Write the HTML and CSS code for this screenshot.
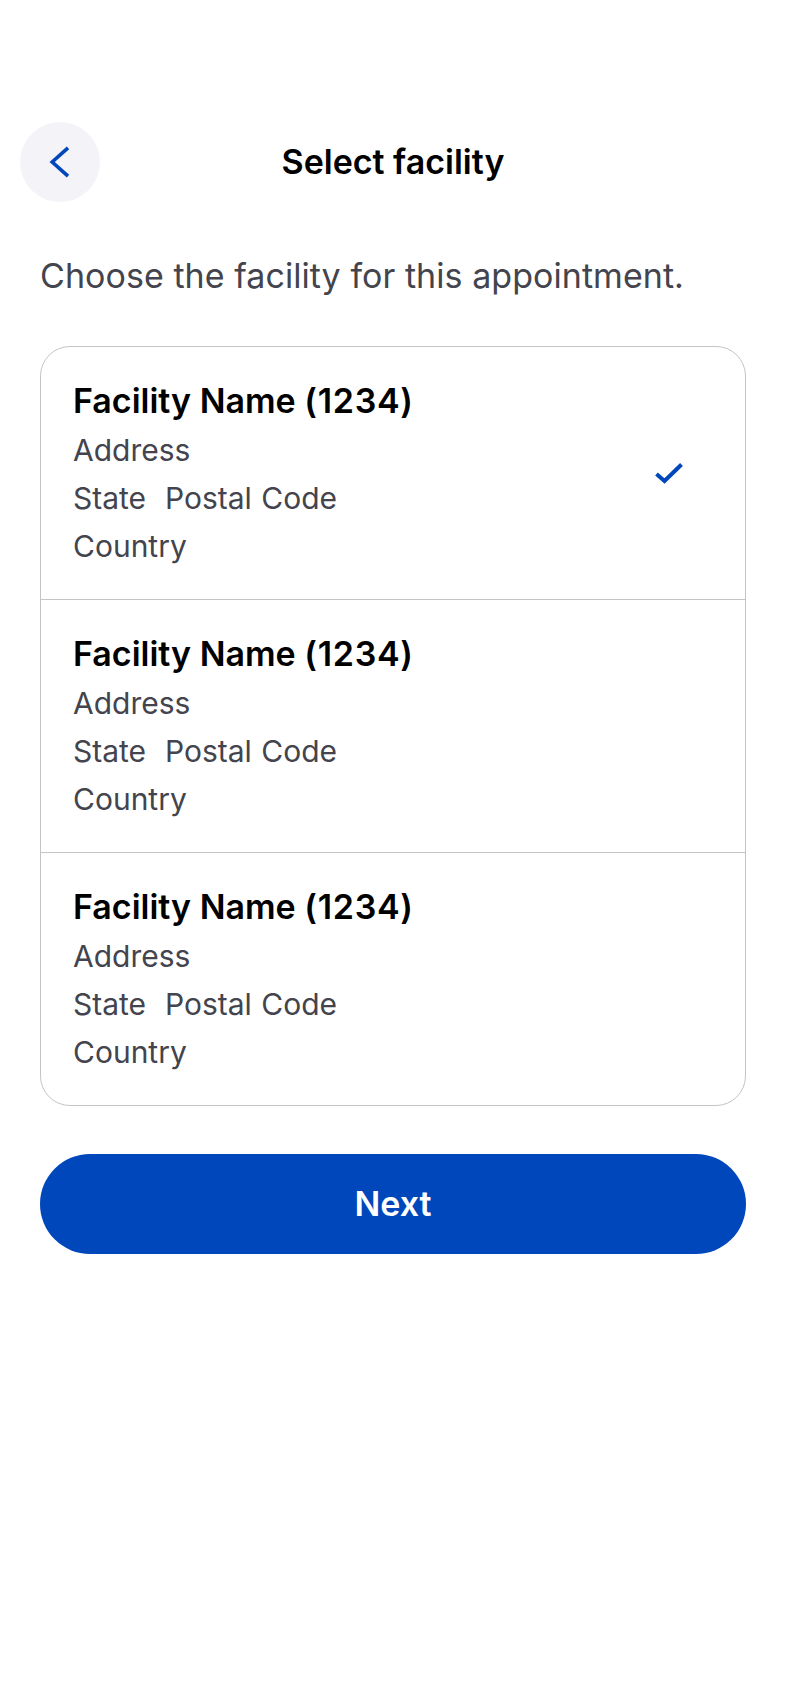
FILE: index.html
```html
<!DOCTYPE html>
<html lang="en">
<head>
<meta charset="utf-8">
<title>Select facility</title>
<link rel="stylesheet" href="styles.css">
</head>
<body>
<main class="screen">
  <header class="topbar">
    <button class="back" aria-label="Back">
      <svg class="back-icon" viewBox="0 0 24 36" width="24" height="36"><path d="M20 3.8 L4.2 18 L20 32.2" fill="none"/></svg>
    </button>
    <h1 class="title">Select facility</h1>
  </header>
  <p class="intro">Choose the facility for this appointment.</p>
  <section class="card">
    <div class="row">
      <div class="info">
        <h2 class="name">Facility Name <span class="code">(1234)</span></h2>
        <p class="line">Address</p>
        <p class="line line-state">State&nbsp; Postal Code</p>
        <p class="line">Country</p>
      </div>
      <svg class="check" viewBox="0 0 28 22" width="28" height="22"><path d="M1.5 12 L9.5 19 L26.5 2.5" fill="none"/></svg>
    </div>
    <div class="row">
      <div class="info">
        <h2 class="name">Facility Name <span class="code">(1234)</span></h2>
        <p class="line">Address</p>
        <p class="line line-state">State&nbsp; Postal Code</p>
        <p class="line">Country</p>
      </div>
    </div>
    <div class="row">
      <div class="info">
        <h2 class="name">Facility Name <span class="code">(1234)</span></h2>
        <p class="line">Address</p>
        <p class="line line-state">State&nbsp; Postal Code</p>
        <p class="line">Country</p>
      </div>
    </div>
  </section>
  <button class="next">Next</button>
</main>
</body>
</html>
```
FILE: styles.css
```css
* { box-sizing: border-box; }
html, body { margin: 0; padding: 0; background: #fff; }
body { font-family: Inter, "Liberation Sans", sans-serif; }
.screen { width: 786px; height: 1704px; padding: 122px 40px 0; }
.topbar { position: relative; display: flex; align-items: center; justify-content: center; height: 80px; }
.back { position: absolute; left: -20px; top: 0; width: 80px; height: 80px; border: 0; padding: 0; border-radius: 50%; background: #f3f3f8; display: flex; align-items: center; justify-content: center; }
.back-icon { stroke: #0047bb; stroke-width: 3.6; }
.title { margin: 0; font-size: 34px; font-weight: 600; line-height: 80px; color: #000; }
.intro { margin: 52px 0 0; font-size: 34px; line-height: 44px; color: #43444d; letter-spacing: 0.05px; }
.card { margin-top: 48px; border: 1px solid #c4c4c4; border-radius: 30px; }
.row { display: flex; align-items: center; justify-content: space-between; height: 253px; padding: 0 62px 0 32px; border-top: 1px solid #c4c4c4; }
.row:first-child { border-top: 0; height: 252px; }
.name { margin: 0 0 2px; padding-top: 2px; font-size: 34px; line-height: 46px; font-weight: 600; color: #000; }
.code { letter-spacing: 0.7px; }
.line { margin: 0; font-size: 30px; line-height: 48px; color: #43444d; }
.line-state { word-spacing: 1px; }
.check { stroke: #0047bb; stroke-width: 4; }
.next { display: block; width: 100%; height: 100px; margin-top: 48px; padding-bottom: 2px; border: 0; border-radius: 50px; background: #0047bb; color: #fff; font: 600 34px Inter, "Liberation Sans", sans-serif; }
```
